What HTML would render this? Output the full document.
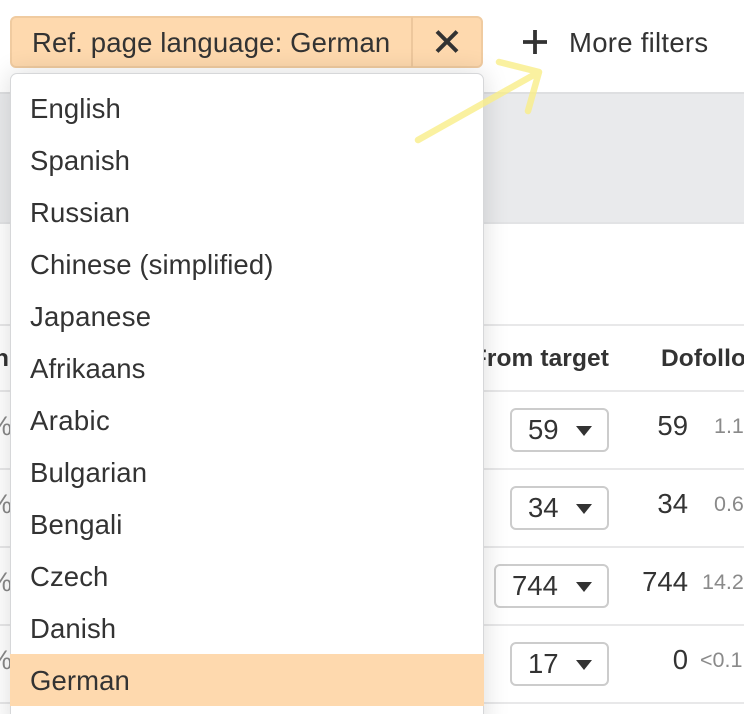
<!DOCTYPE html>
<html>
<head>
<meta charset="utf-8">
<style>
html,body{margin:0;padding:0;background:#fff;width:744px;height:714px;overflow:hidden}
#r{width:744px;height:714px;overflow:hidden;position:relative;font-family:"Liberation Sans",Arial,sans-serif;color:#333}
.a{position:absolute;white-space:nowrap}
.line{position:absolute;left:0;width:744px;height:2px;background:#e8e8e9}
.sel{position:absolute;height:44px;box-sizing:border-box;border:2px solid #cccccc;border-radius:6px;background:#fff;right:135px}
.sel span{position:absolute;font-size:27.5px;line-height:42px;top:-1px;left:16px}
.tri{position:absolute;right:15px;top:16px;width:0;height:0;border-left:8px solid transparent;border-right:8px solid transparent;border-top:10px solid #333}
.n{position:absolute;right:56px;font-size:27.5px;line-height:32px}
.p{position:absolute;left:714px;font-size:21.5px;line-height:28px;color:#8a8a8a}
.pc{position:absolute;left:-12px;font-size:27px;line-height:32px;color:#888}
.i{position:absolute;left:20px;font-size:27.5px;line-height:52px;height:52px;width:400px;letter-spacing:.1px}
.h{font-size:24.5px;font-weight:bold;line-height:32px;letter-spacing:.1px}
</style>
</head>
<body>
<div id="r">
<!-- grey band -->
<div class="a" style="left:0;top:92px;width:744px;height:132px;background:#e9eaec;border-top:2px solid #dedfe1;border-bottom:2px solid #e2e3e5;box-sizing:border-box"></div>

<!-- table -->
<div class="line" style="top:324px"></div>
<div class="line" style="top:390px"></div>
<div class="line" style="top:468px"></div>
<div class="line" style="top:546px"></div>
<div class="line" style="top:624px"></div>
<div class="line" style="top:702px"></div>

<div class="a h" style="left:-6px;top:343px">n</div>
<div class="pc" style="top:410px">%</div>
<div class="pc" style="top:488px">%</div>
<div class="pc" style="top:566px">%</div>
<div class="pc" style="top:644px">%</div>

<div class="a h" style="right:135px;top:343px">From target</div>
<div class="a h" style="left:661px;top:343px">Dofollow</div>

<div class="sel" style="top:408px;width:99px"><span>59</span><i class="tri"></i></div>
<div class="sel" style="top:486px;width:99px"><span>34</span><i class="tri"></i></div>
<div class="sel" style="top:564px;width:115px"><span>744</span><i class="tri"></i></div>
<div class="sel" style="top:642px;width:99px"><span>17</span><i class="tri"></i></div>

<div class="n" style="top:410px">59</div>
<div class="n" style="top:488px">34</div>
<div class="n" style="top:566px">744</div>
<div class="n" style="top:644px">0</div>
<div class="p" style="top:412px">1.1</div>
<div class="p" style="top:490px">0.6</div>
<div class="p" style="left:702px;top:568px">14.2</div>
<div class="p" style="left:700px;top:646px">&lt;0.1</div>

<!-- chip -->
<div class="a" style="left:10px;top:16px;width:473px;height:52px;box-sizing:border-box;background:#fed9ae;border:2px solid #f0cba0;border-radius:6px"></div>
<div class="a" style="left:411px;top:17px;width:2px;height:50px;background:#edc79c"></div>
<div class="a" style="left:32px;top:26px;font-size:27.5px;line-height:34px;letter-spacing:.14px">Ref. page language: German</div>
<svg class="a" style="left:432px;top:27px" width="30" height="30" viewBox="0 0 30 30"><path d="M5 4.5L25 24.5M25 4.5L5 24.5" stroke="#333" stroke-width="4" fill="none"/></svg>

<!-- more filters -->
<svg class="a" style="left:520px;top:27px" width="30" height="30" viewBox="0 0 30 30"><path d="M3 15H27M15 3V27" stroke="#333" stroke-width="3.8" fill="none"/></svg>
<div class="a" style="left:569px;top:26px;font-size:27.5px;line-height:34px;letter-spacing:.28px">More filters</div>

<!-- dropdown -->
<div class="a" style="left:10px;top:73px;width:474px;height:660px;box-sizing:border-box;background:#fff;border-radius:7px;border:1px solid #d6d7d9;box-shadow:0 0 26px rgba(0,0,0,.14)"></div>
<div class="a" style="left:10px;top:654px;width:474px;height:52px;background:#fed9ae"></div>
<div class="a" style="left:10px;top:0;width:0;height:0">
<div class="i" style="top:83px">English</div>
<div class="i" style="top:135px">Spanish</div>
<div class="i" style="top:187px">Russian</div>
<div class="i" style="top:239px">Chinese (simplified)</div>
<div class="i" style="top:291px;letter-spacing:.25px">Japanese</div>
<div class="i" style="top:343px">Afrikaans</div>
<div class="i" style="top:395px;letter-spacing:.35px">Arabic</div>
<div class="i" style="top:447px">Bulgarian</div>
<div class="i" style="top:499px">Bengali</div>
<div class="i" style="top:551px">Czech</div>
<div class="i" style="top:603px">Danish</div>
<div class="i" style="top:655px">German</div>
</div>

<!-- arrow annotation -->
<svg class="a" style="left:0;top:0" width="744" height="714" viewBox="0 0 744 714"><path d="M418 140L539 72M499 62L539 72L528 111" fill="none" stroke="#f9ee88" stroke-opacity=".8" stroke-width="6.5" stroke-linecap="round" stroke-linejoin="round"/></svg>
</div>
</body>
</html>
